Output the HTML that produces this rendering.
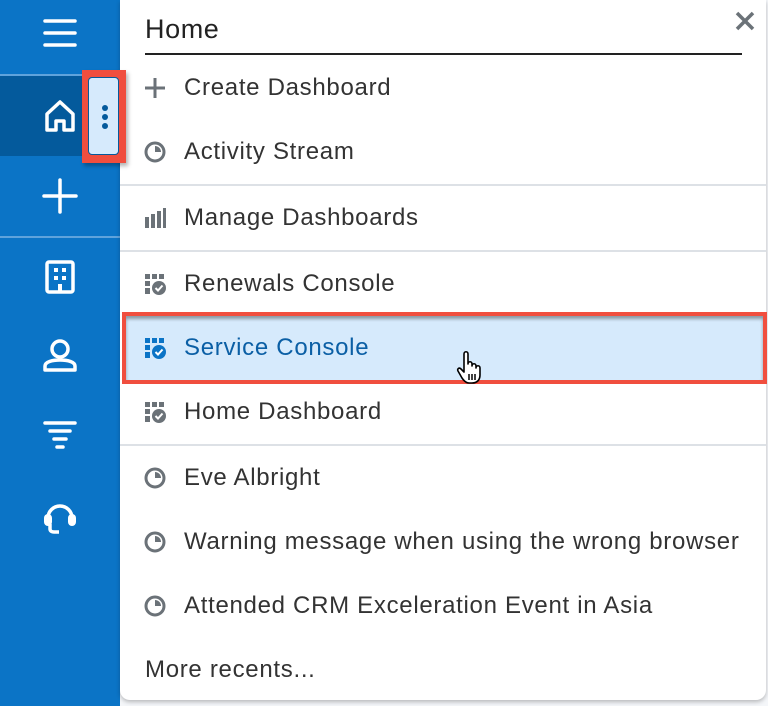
<!DOCTYPE html>
<html><head><style>
*{margin:0;padding:0;box-sizing:border-box}
body{width:768px;height:706px;overflow:hidden;background:#f4f6f9;font-family:"Liberation Sans",Arial,sans-serif;position:relative}
.side{position:absolute;left:0;top:0;width:120px;height:706px;background:#0b74c6}
.side .hl{position:absolute;left:0;top:76px;width:120px;height:80px;background:#045a9c}
.side .ln{position:absolute;left:0;width:120px;height:2px;background:#5fa3dc}
.ic{position:absolute;left:40px;width:40px;height:40px}
.panel{position:absolute;left:120px;top:0;width:646px;height:700px;background:#fff;border-radius:0 0 10px 10px;box-shadow:0 2px 4px rgba(0,0,0,.25)}
.title{position:absolute;left:25px;top:14px;font-size:27px;color:#222;letter-spacing:0.6px}
.uline{position:absolute;left:25px;top:53px;width:597px;height:2px;background:#222}
.item{position:absolute;left:0;width:646px;height:64px;font-size:24px;letter-spacing:0.7px;color:#333;line-height:64px;padding-left:64px;white-space:nowrap}
.item svg{position:absolute;left:24px;top:21px}
.sep{position:absolute;left:0;width:646px;height:2px;background:#dde1e6}
.sel{position:absolute;left:122px;top:312px;width:645px;height:72px;border:4px solid #f04e3e;background:#d6eafc;box-shadow:inset 0 3px 3px rgba(0,0,0,.35)}
.keb{position:absolute;left:82px;top:70px;width:44px;height:93px;background:#f04e3e;box-shadow:2px 3px 4px rgba(0,0,0,.3);z-index:5}
.keb div{position:absolute;left:6px;top:7px;width:31px;height:78px;background:#d6eafc;border-radius:4px;border:1px solid #045a9c}
.dot{position:absolute;left:13px;width:6px;height:6px;border-radius:50%;background:#045a9c}
</style></head><body>
<div class="side">
 <div class="hl"></div>
 <div class="ln" style="top:74px"></div>
 <div class="ln" style="top:236px"></div>
 <svg class="ic" style="top:13px" viewBox="0 0 40 40"><g stroke="#fff" stroke-width="3.5" stroke-linecap="round"><line x1="5" y1="8" x2="35" y2="8"/><line x1="5" y1="20" x2="35" y2="20"/><line x1="5" y1="32" x2="35" y2="32"/></g></svg>
 <svg class="ic" style="top:97px" viewBox="0 0 40 40"><path d="M7 33V17L20 5 33 17V33H24V24H16V33Z" fill="none" stroke="#fff" stroke-width="3.5" stroke-linejoin="round"/></svg>
 <svg class="ic" style="top:176px" viewBox="0 0 40 40"><g stroke="#fff" stroke-width="3.5" stroke-linecap="round"><line x1="20" y1="4" x2="20" y2="36"/><line x1="4" y1="20" x2="36" y2="20"/></g></svg>
 <svg class="ic" style="top:257px" viewBox="0 0 40 40"><rect x="7" y="5" width="26" height="30" rx="2" fill="none" stroke="#fff" stroke-width="3.5"/><g fill="#fff"><rect x="14" y="11" width="4" height="4"/><rect x="22" y="11" width="4" height="4"/><rect x="14" y="19" width="4" height="4"/><rect x="22" y="19" width="4" height="4"/><rect x="18" y="27" width="4" height="8"/></g></svg>
 <svg class="ic" style="top:335px" viewBox="0 0 40 40"><circle cx="20" cy="14" r="8" fill="none" stroke="#fff" stroke-width="3.5"/><path d="M5 35V31C5 27 12 25 20 25S35 27 35 31V35Z" fill="none" stroke="#fff" stroke-width="3.5" stroke-linejoin="round"/></svg>
 <svg class="ic" style="top:415px" viewBox="0 0 40 40"><g stroke="#fff" stroke-width="3.5" stroke-linecap="round"><line x1="5" y1="8" x2="35" y2="8"/><line x1="10" y1="16" x2="30" y2="16"/><line x1="14" y1="24" x2="26" y2="24"/><line x1="17" y1="32" x2="23" y2="32"/></g></svg>
 <svg class="ic" style="top:498px" viewBox="0 0 40 40"><path d="M8 20A12 12 0 0 1 32 20" fill="none" stroke="#fff" stroke-width="3.5"/><rect x="4" y="16" width="8" height="12" rx="4" fill="#fff"/><rect x="28" y="16" width="8" height="12" rx="4" fill="#fff"/><path d="M10 26V31C10 33 12 34 14 34H19" fill="none" stroke="#fff" stroke-width="3.5"/></svg>
</div>
<div class="keb"><div><span class="dot" style="top:27px"></span><span class="dot" style="top:36px"></span><span class="dot" style="top:45px"></span></div></div>
<div class="panel">
 <div class="title">Home</div>
 <svg style="position:absolute;left:615px;top:11px" width="20" height="20" viewBox="0 0 20 20"><g stroke="#6b7278" stroke-width="3.5"><line x1="2" y1="2" x2="18" y2="18"/><line x1="18" y1="2" x2="2" y2="18"/></g></svg>
 <div class="uline"></div>
 <div class="item" style="top:56px"><svg width="22" height="22" viewBox="0 0 22 22"><g stroke="#6b7278" stroke-width="3"><line x1="11" y1="1" x2="11" y2="21"/><line x1="1" y1="11" x2="21" y2="11"/></g></svg>Create Dashboard</div>
 <div class="item" style="top:120px"><svg width="22" height="22" viewBox="0 0 22 22"><circle cx="11" cy="11" r="9" fill="none" stroke="#6b7278" stroke-width="3"/><path d="M11 11V5A6 6 0 0 1 17 11Z" fill="#6b7278"/></svg>Activity Stream</div>
 <div class="sep" style="top:184px"></div>
 <div class="item" style="top:186px"><svg width="22" height="22" viewBox="0 0 22 22"><g fill="#6b7278"><rect x="1" y="10" width="4" height="11"/><rect x="7" y="7" width="4" height="14"/><rect x="13" y="4" width="4" height="17"/><rect x="19" y="1" width="3" height="20"/></g></svg>Manage Dashboards</div>
 <div class="sep" style="top:250px"></div>
 <div class="item" style="top:252px"><svg width="22" height="22" viewBox="0 0 22 22"><g fill="#6b7278"><rect x="1" y="1" width="5" height="5"/><rect x="8" y="1" width="5" height="5"/><rect x="15" y="1" width="5" height="5"/><rect x="1" y="8" width="5" height="5"/><rect x="1" y="15" width="5" height="6"/><circle cx="15" cy="15" r="7"/></g><path d="M11.5 15L14 17.5 18.5 12.5" fill="none" stroke="#fff" stroke-width="2"/></svg>Renewals Console</div>
 <div class="item" style="top:380px"><svg width="22" height="22" viewBox="0 0 22 22"><g fill="#6b7278"><rect x="1" y="1" width="5" height="5"/><rect x="8" y="1" width="5" height="5"/><rect x="15" y="1" width="5" height="5"/><rect x="1" y="8" width="5" height="5"/><rect x="1" y="15" width="5" height="6"/><circle cx="15" cy="15" r="7"/></g><path d="M11.5 15L14 17.5 18.5 12.5" fill="none" stroke="#fff" stroke-width="2"/></svg>Home Dashboard</div>
 <div class="sep" style="top:444px"></div>
 <div class="item" style="top:446px"><svg width="22" height="22" viewBox="0 0 22 22"><circle cx="11" cy="11" r="9" fill="none" stroke="#6b7278" stroke-width="3"/><path d="M11 11V5A6 6 0 0 1 17 11Z" fill="#6b7278"/></svg>Eve Albright</div>
 <div class="item" style="top:510px"><svg width="22" height="22" viewBox="0 0 22 22"><circle cx="11" cy="11" r="9" fill="none" stroke="#6b7278" stroke-width="3"/><path d="M11 11V5A6 6 0 0 1 17 11Z" fill="#6b7278"/></svg>Warning message when using the wrong browser</div>
 <div class="item" style="top:574px"><svg width="22" height="22" viewBox="0 0 22 22"><circle cx="11" cy="11" r="9" fill="none" stroke="#6b7278" stroke-width="3"/><path d="M11 11V5A6 6 0 0 1 17 11Z" fill="#6b7278"/></svg>Attended CRM Exceleration Event in Asia</div>
 <div class="item" style="top:638px;padding-left:25px">More recents...</div>
</div>
<div class="sel"></div>
<div class="item" style="position:absolute;left:120px;top:316px;color:#0b5fa5"><svg width="22" height="22" viewBox="0 0 22 22"><g fill="#0b74c6"><rect x="1" y="1" width="5" height="5"/><rect x="8" y="1" width="5" height="5"/><rect x="15" y="1" width="5" height="5"/><rect x="1" y="8" width="5" height="5"/><rect x="1" y="15" width="5" height="6"/><circle cx="15" cy="15" r="7"/></g><path d="M11.5 15L14 17.5 18.5 12.5" fill="none" stroke="#fff" stroke-width="2"/></svg>Service Console</div>
<svg style="position:absolute;left:455px;top:350px" width="32" height="34" viewBox="0 0 32 34"><path d="M9 4C9 1 13 1 13 4V14C13 11 17 11 17 14V16C17 13 21 13 21 16V18C21 15 25 15 25 18V25C25 30 22 33 17 33H14C11 33 9 31 7 28L3 21C2 19 4 17 6 19L9 22Z" fill="#fff" stroke="#000" stroke-width="1.6" stroke-linejoin="round"/><g stroke="#000" stroke-width="1.5"><line x1="14" y1="24" x2="14" y2="30"/><line x1="17" y1="24" x2="17" y2="30"/><line x1="20" y1="24" x2="20" y2="30"/></g></svg>
</body></html>
